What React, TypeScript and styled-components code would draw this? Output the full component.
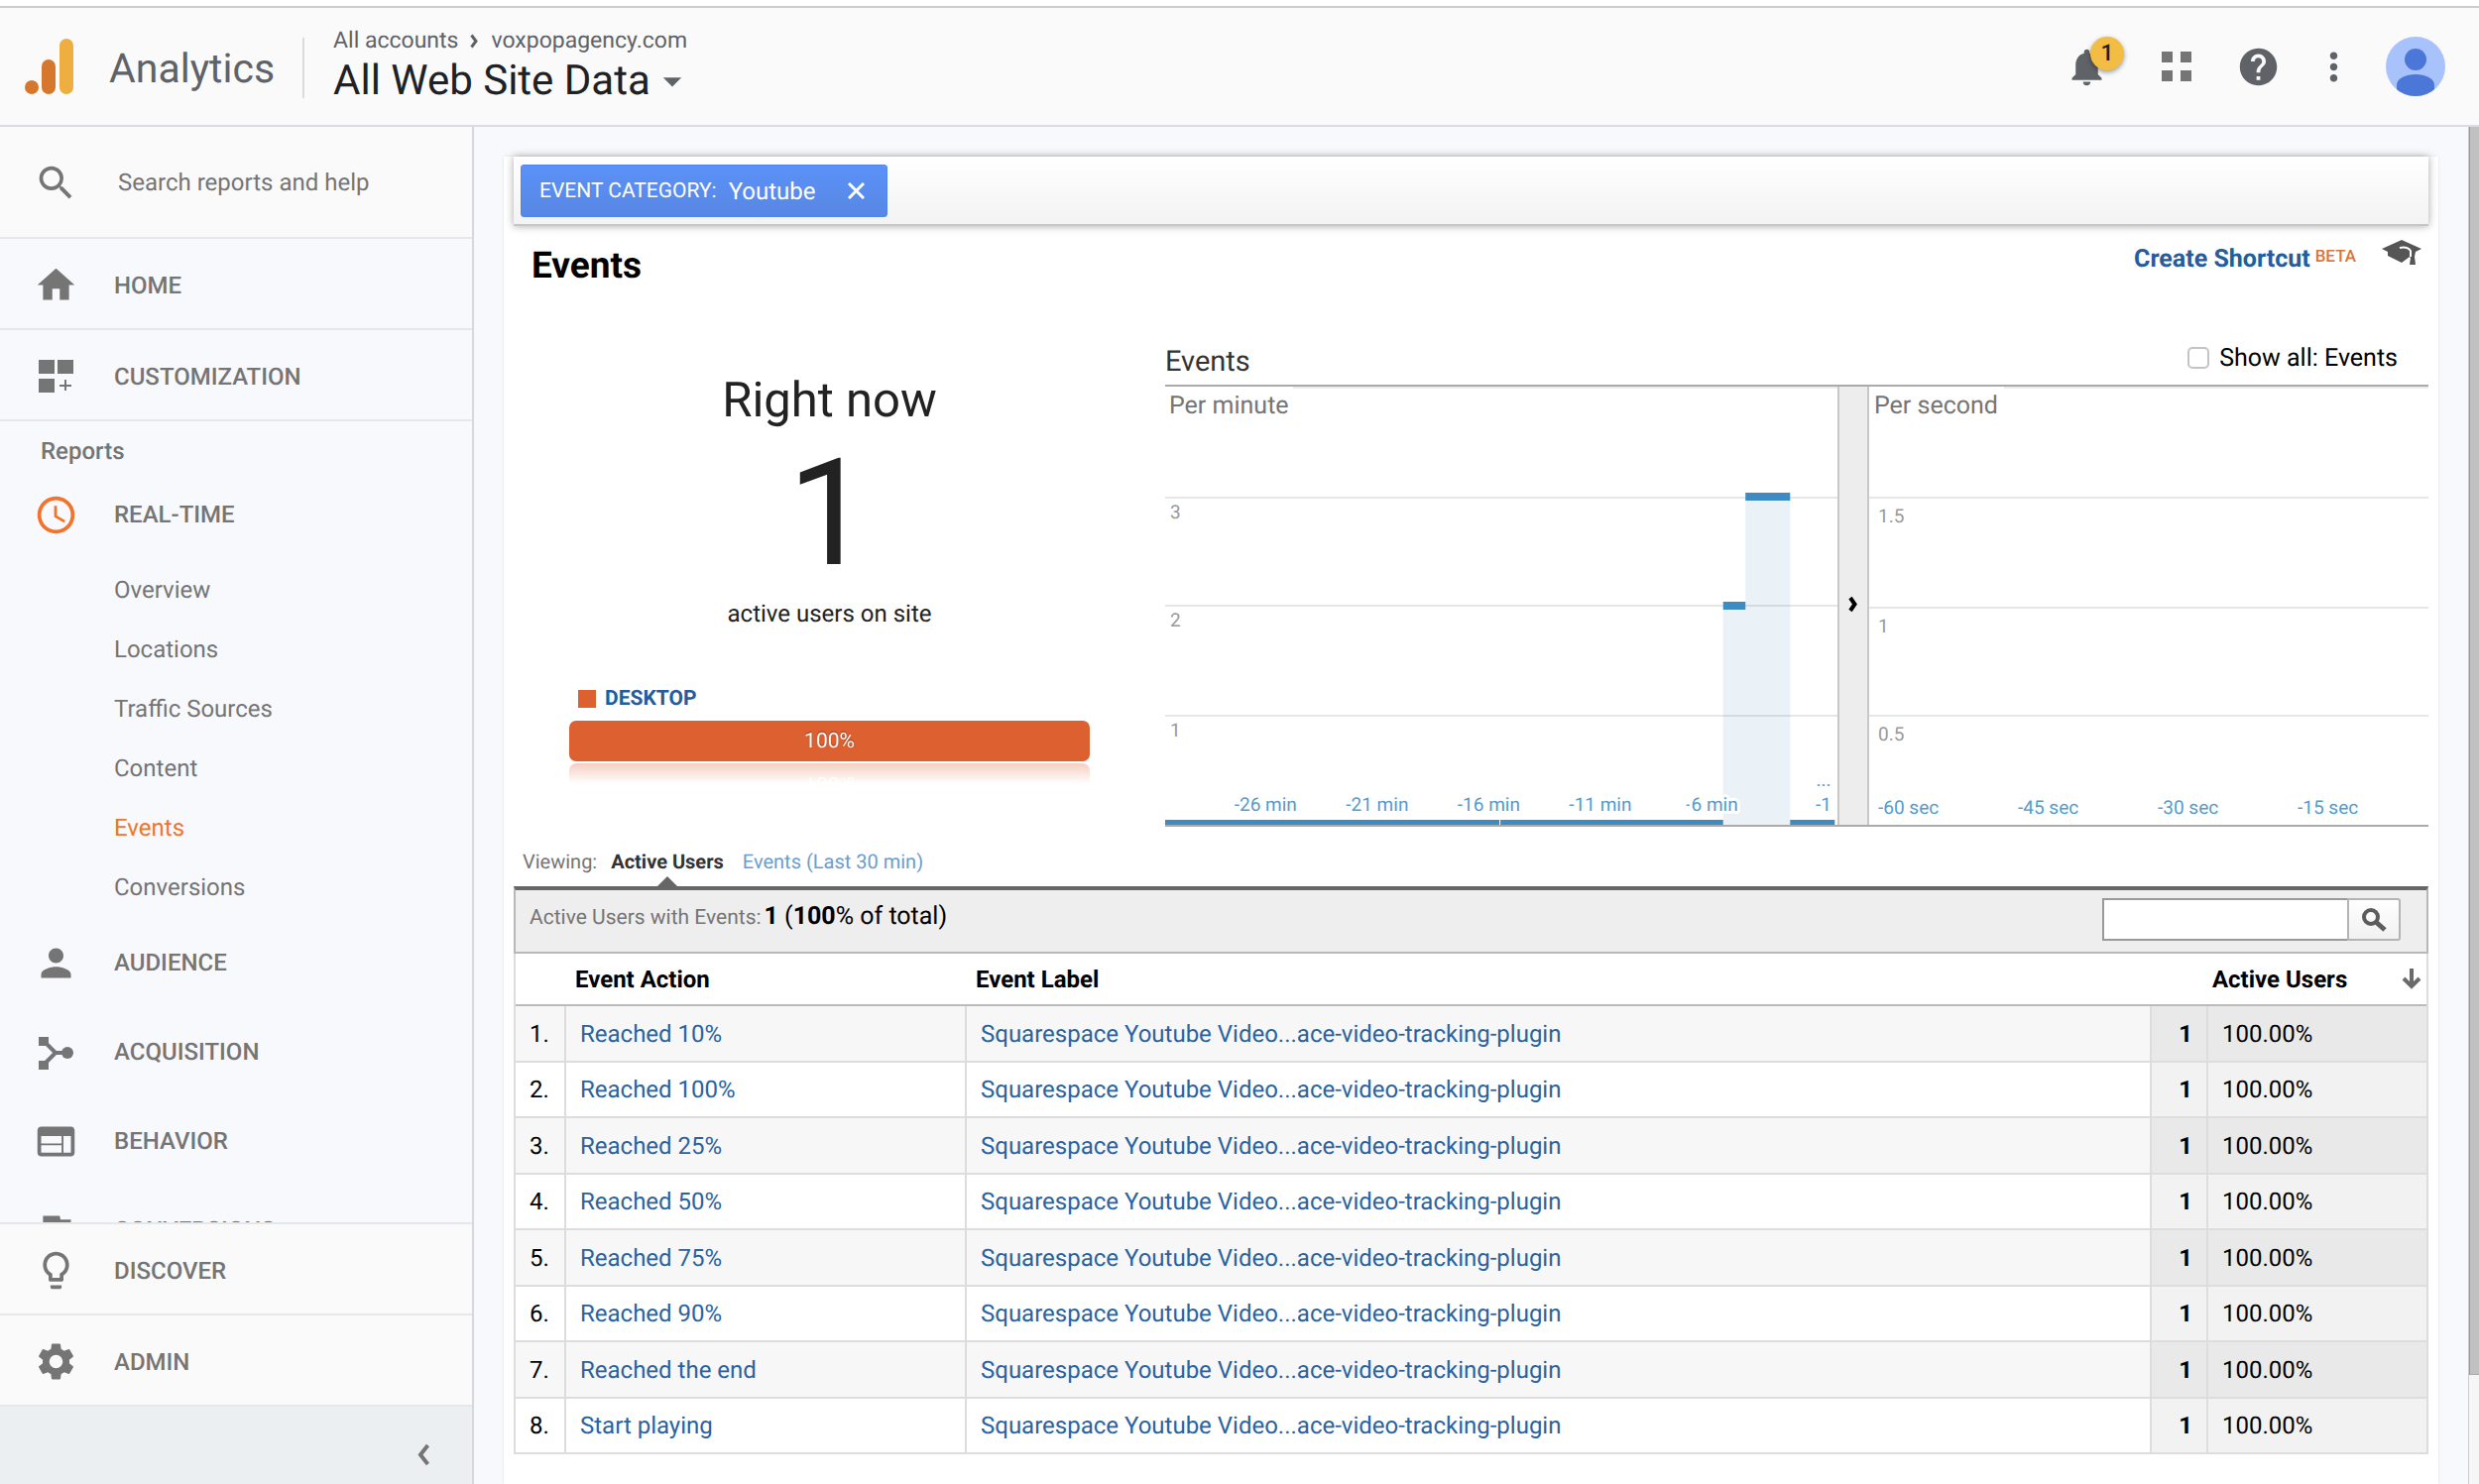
import React from 'react';
import styled, { createGlobalStyle } from 'styled-components';
import {
  MdAccessTime,
  MdArrowDropDown,
  MdFlag,
  MdHelp,
  MdHome,
  MdLightbulbOutline,
  MdMoreVert,
  MdNotifications,
  MdPerson,
  MdSearch,
  MdSettings,
  MdWeb,
} from 'react-icons/md';

const GlobalStyle = createGlobalStyle`
  *, *::before, *::after { box-sizing: border-box; }
  body {
    margin: 0;
    background: #f8f9fc;
    color: #000;
    font-family: Roboto, "Liberation Sans", sans-serif;
    font-size: 24px;
    text-rendering: geometricPrecision;
  }
  button, input { font: inherit; color: inherit; text-rendering: inherit; }
  button { border: 0; padding: 0; background: none; cursor: pointer; }
  a { color: inherit; text-decoration: none; }
  svg { display: block; flex: none; }
  h1, h2, h3, p, ul { margin: 0; padding: 0; font-weight: 400; }
  ul { list-style: none; }
`;

const Page = styled.div`
  display: flex;
  flex-direction: column;
  height: 100vh;
  overflow: hidden;
  border-top: 6px solid #fff;
`;

/* ---------- top bar ---------- */

const TopBar = styled.header`
  display: flex;
  flex: none;
  align-items: center;
  height: 122px;
  padding: 0 34px 0 25px;
  background: #fafafa;
  border-top: 2px solid #ccc;
  border-bottom: 2px solid #dadce2;
`;

const Brand = styled.a`
  display: flex;
  align-items: center;
  gap: 36px;
  color: #5f6368;
  font-size: 41px;
`;

const BrandName = styled.span`
  padding-top: 6px;
  line-height: 48px;
`;

const PropertyPicker = styled.div`
  display: flex;
  flex-direction: column;
  align-items: flex-start;
  margin-left: 28px;
  position: relative;
  padding-left: 31px;
  &::before {
    content: '';
    position: absolute;
    left: 0;
    top: 12px;
    bottom: 9px;
    width: 2px;
    background: #dadce0;
  }
`;

const Crumbs = styled.nav`
  display: flex;
  align-items: center;
  gap: 12px;
  color: #5f6368;
  font-size: 23px;
  line-height: 30px;
`;

const PropertyButton = styled.button`
  display: flex;
  align-items: center;
  color: #202124;
  font-size: 42px;
  line-height: 52px;
  svg { color: #5f6368; }
`;

const Actions = styled.div`
  display: flex;
  align-items: center;
  gap: 38px;
  margin-left: auto;
  color: #5f6368;
`;

const IconButton = styled.button<{ $width?: number }>`
  display: flex;
  justify-content: center;
  width: ${(p) => p.$width ?? 45}px;
`;

const BellButton = styled.button`
  position: relative;
  width: 52px;
`;

const Badge = styled.span`
  position: absolute;
  top: -8px;
  left: 26px;
  width: 34px;
  height: 34px;
  border-radius: 50%;
  background: #f2bd42;
  color: #202124;
  font-size: 23px;
  font-weight: 500;
  line-height: 34px;
  text-align: center;
  box-shadow: 0 2px 5px rgba(0, 0, 0, 0.4);
`;

/* ---------- sidebar ---------- */

const Body = styled.div`
  display: flex;
  flex: 1;
  min-height: 0;
`;

const Sidebar = styled.aside`
  display: flex;
  flex-direction: column;
  flex: none;
  width: 478px;
  border-right: 2px solid #d6d8da;
  color: #757575;
`;

const SearchRow = styled.label`
  display: flex;
  flex: none;
  align-items: center;
  gap: 40px;
  height: 113px;
  padding: 2px 34px 0;
  background: #fafafa;
  border-bottom: 2px solid #e6e7e9;
`;

const SearchInput = styled.input`
  flex: 1;
  min-width: 0;
  padding: 0 0 2px;
  border: 0;
  outline: 0;
  background: none;
  font-size: 24px;
  &::placeholder { color: #757575; opacity: 1; }
`;

const NavScroll = styled.nav`
  flex: 1;
  min-height: 0;
  overflow: hidden;
`;

const NavItem = styled.a<{ $ruled?: boolean }>`
  display: flex;
  align-items: center;
  gap: 36px;
  height: ${(p) => (p.$ruled ? 92 : 90)}px;
  padding: ${(p) => (p.$ruled ? 3 : 0)}px 0 0 34px;
  border-bottom: ${(p) => (p.$ruled ? '2px solid #e6e7e9' : '0')};
  font-weight: 500;
`;

const NavHeading = styled.h2`
  height: 49px;
  padding: 15px 0 0 41px;
  font-size: 24px;
  font-weight: 500;
  line-height: 30px;
`;

const SubList = styled.ul`
  padding: 1px 0;
`;

const SubLink = styled.a<{ $active?: boolean }>`
  display: block;
  padding-left: 115px;
  line-height: 60px;
  color: ${(p) => (p.$active ? '#f4732a' : 'inherit')};
`;

const NavFooter = styled.div`
  flex: none;
  border-top: 2px solid #e6e7e9;
  background: #fafafa;
`;

const Collapse = styled.button`
  display: flex;
  align-items: center;
  justify-content: flex-end;
  width: 100%;
  height: 78px;
  padding: 18px 43px 0 0;
  background: #eceff2;
  color: #757575;
`;

/* ---------- report ---------- */

const Main = styled.main`
  flex: 1;
  min-width: 0;
  padding: 30px 30px 0;
  overflow: hidden;
`;

const Card = styled.section`
  min-height: 100%;
  padding: 0 10px;
  background: #fff;
  box-shadow: 0 0 3px rgba(0, 0, 0, 0.1);
`;

const ScrollTrack = styled.div`
  flex: none;
  width: 11px;
  background: #f6f6f6;
  border-left: 1px solid #ccc;
`;

const ScrollThumb = styled.div`
  height: 92%;
  background: #c1c1c1;
  border-left: 1px solid #999;
  border-bottom: 1px solid #aaa;
`;

const FilterBar = styled.div`
  display: flex;
  align-items: center;
  height: 70px;
  padding: 0 7px;
  background: linear-gradient(#fff, #f3f3f3);
  border-bottom: 2px solid #c6c6c6;
  box-shadow: 0 0 8px rgba(0, 0, 0, 0.35);
`;

const Chip = styled.div`
  display: flex;
  align-items: center;
  gap: 12px;
  height: 53px;
  padding: 1px 22px 0 18px;
  border: 1px solid #5085ea;
  border-radius: 3px;
  background: linear-gradient(#5b91f7, #5787e4);
  color: #fff;
`;

const ChipName = styled.span`
  font-size: 21px;
`;

const ChipClose = styled.button`
  margin-left: 20px;
`;

const TitleRow = styled.div`
  display: flex;
  justify-content: space-between;
  height: 80px;
  padding: 0 7px 0 18px;
`;

const Title = styled.h1`
  font-size: 37px;
  font-weight: 700;
  line-height: 82px;
`;

const TitleActions = styled.div`
  display: flex;
  align-items: center;
  height: 66px;
`;

const Shortcut = styled.a`
  color: #245c9c;
  font-size: 25px;
  font-weight: 700;
`;

const Beta = styled.sup`
  margin: 0 26px 5px 5px;
  color: #d9763a;
  font-size: 17px;
  font-weight: 500;
  line-height: 18px;
`;

const CapButton = styled.button`
  margin-bottom: 12px;
`;

const Overview = styled.div`
  display: grid;
  grid-template-columns: 1fr 2fr;
  gap: 20px;
`;

const NowPanel = styled.div`
  display: flex;
  flex-direction: column;
  min-width: 0;
  padding: 66px 56px 0;
  color: #222;
  text-align: center;
`;

const NowTitle = styled.h2`
  font-size: 49px;
  line-height: 60px;
`;

const NowCount = styled.p`
  margin: 24px 0 26px;
  font-size: 150px;
  line-height: 120px;
`;

const NowCaption = styled.p`
  line-height: 30px;
`;

const Legend = styled.div`
  display: flex;
  align-items: center;
  gap: 9px;
  margin: 59px 0 10px 9px;
  color: #245c9c;
  font-size: 21px;
  font-weight: 700;
  line-height: 24px;
  &::before {
    content: '';
    width: 18px;
    height: 18px;
    background: #dd6031;
  }
`;

const DeviceBar = styled.div`
  height: 41px;
  border-radius: 7px;
  background: #dd6031;
  color: #fff;
  font-size: 21px;
  line-height: 42px;
  text-shadow: 0 -1px 1px rgba(0, 0, 0, 0.4);
  -webkit-box-reflect: below 2px linear-gradient(transparent 50%, rgba(0, 0, 0, 0.3));
`;

const ChartPanel = styled.div`
  min-width: 0;
  padding-top: 33px;
`;

const ChartHead = styled.div`
  display: flex;
  align-items: center;
  justify-content: space-between;
  height: 49px;
  border-bottom: 2px solid #aaa;
`;

const ChartTitle = styled.h2`
  color: #333;
  font-size: 29px;
`;

const CheckLabel = styled.label`
  display: flex;
  align-items: center;
  gap: 10px;
  margin: 0 31px 7px 0;
  font-size: 25px;
`;

const Check = styled.input`
  appearance: none;
  width: 22px;
  height: 22px;
  margin: 0;
  border: 2px solid #c4c4c4;
  border-radius: 5px;
  background: #fff;
`;

const Charts = styled.div`
  display: flex;
  border-bottom: 2px solid #aaa;
`;

const Plot = styled.div<{ $grow: number }>`
  position: relative;
  flex: ${(p) => p.$grow} 1 0;
  min-width: 0;
  height: 442px;
`;

const PlotName = styled.h3<{ $left: number }>`
  position: absolute;
  top: 5px;
  left: ${(p) => p.$left}px;
  color: #757575;
  font-size: 25px;
  line-height: 30px;
`;

const PlotSvg = styled.svg`
  width: 100%;
  height: 100%;
  font-size: 19px;
`;

const Splitter = styled.button`
  display: flex;
  align-items: center;
  justify-content: center;
  flex: none;
  width: 32px;
  padding-bottom: 4px;
  border: solid #c8c8c8;
  border-width: 0 2px;
  background: #ededed;
`;

const ViewRow = styled.div`
  display: flex;
  align-items: flex-start;
  height: 60px;
  padding: 20px 0 0 9px;
  color: #757575;
  font-size: 20px;
  line-height: 30px;
`;

const ViewTab = styled.button<{ $current?: boolean }>`
  margin-left: ${(p) => (p.$current ? 14 : 19)}px;
  color: ${(p) => (p.$current ? '#333' : '#6c9dcb')};
  font-weight: ${(p) => (p.$current ? 700 : 400)};
  line-height: 30px;
  &::after {
    content: '';
    display: ${(p) => (p.$current ? 'block' : 'none')};
    width: 22px;
    margin: 0 auto;
    border: solid transparent;
    border-width: 0 11px 11px;
    border-bottom-color: #666;
  }
`;

const Summary = styled.div`
  display: flex;
  align-items: center;
  justify-content: space-between;
  height: 68px;
  padding: 0 26px 0 14px;
  background: #eee;
  border: 2px solid #b8b8b8;
  border-top: 4px solid #666;
`;

const SummaryText = styled.p`
  padding-bottom: 9px;
  font-size: 25px;
`;

const SummaryLabel = styled.span`
  margin-right: 3px;
  color: #757575;
  font-size: 21px;
`;

const TableSearch = styled.form`
  display: flex;
  height: 43px;
  margin-bottom: 3px;
`;

const TableSearchInput = styled.input`
  width: 247px;
  padding: 0 8px;
  border: 2px solid #999;
  border-right-width: 0;
  background: #fff;
`;

const TableSearchButton = styled.button`
  display: flex;
  align-items: center;
  justify-content: center;
  width: 54px;
  border: 2px solid #b4b4b4;
  border-radius: 0 3px 3px 0;
  background: linear-gradient(#fff, #f1f1f1);
`;

const Table = styled.table`
  width: 100%;
  table-layout: fixed;
  border: solid #ddd;
  border-width: 0 2px;
  border-spacing: 0;
  text-align: left;
`;

const HeadCell = styled.th<{ $pad?: number }>`
  height: 53px;
  padding: 0 5px 0 ${(p) => p.$pad ?? 9}px;
  border-bottom: 2px solid #bbb;
  font-weight: 700;
`;

const SortButton = styled.button`
  display: flex;
  align-items: center;
  justify-content: space-between;
  width: 100%;
  font-weight: 700;
`;

const Row = styled.tr`
  --plain: #fff;
  --metric: #f2f2f2;
  height: 56px;
  &:nth-child(odd) {
    --plain: #f7f7f7;
    --metric: #e9e9e9;
    height: 57px;
  }
`;

const Cell = styled.td<{ $metric?: boolean }>`
  padding: 0 14px;
  background: var(${(p) => (p.$metric ? '--metric' : '--plain')});
  border-right: 2px solid #ddd;
  border-bottom: 2px solid #ddd;
  &:last-child { border-right: 0; }
`;

const CountCell = styled(Cell)`
  font-weight: 700;
  text-align: right;
`;

const CellLink = styled.a`
  color: #2a639f;
`;

/* ---------- drawings ---------- */

const Logo = () => (
  <svg width="49" height="56" viewBox="0 0 49 56" aria-hidden="true">
    <circle cx="7" cy="49" r="7" fill="#d5782d" />
    <rect x="17" y="21" width="14" height="35" rx="7" fill="#d5782d" />
    <rect x="35" y="0" width="14" height="56" rx="7" fill="#eeae40" />
  </svg>
);

const Chevron = ({ size, stroke, left }: { size: number; stroke: number; left?: boolean }) => (
  <svg width={size / 2 + stroke} height={size + stroke} aria-hidden="true">
    <path
      d={
        left
          ? `M${size / 2 + stroke / 2} ${stroke / 2}L${stroke} ${(size + stroke) / 2}L${size / 2 + stroke / 2} ${size + stroke / 2}`
          : `M${stroke / 2} ${stroke / 2}L${size / 2} ${(size + stroke) / 2}L${stroke / 2} ${size + stroke / 2}`
      }
      fill="none"
      stroke="currentColor"
      strokeWidth={stroke}
    />
  </svg>
);

const AppsIcon = () => (
  <svg width="30" height="30" fill="#757575" aria-hidden="true">
    <path d="M0 0h11v11H0zM19 0h11v11H19zM0 19h11v11H0zM19 19h11v11H19z" />
  </svg>
);

const Avatar = () => (
  <svg width="60" height="60" viewBox="0 0 60 60" aria-hidden="true">
    <clipPath id="avatar-disc">
      <circle cx="30" cy="30" r="30" />
    </clipPath>
    <g clipPath="url(#avatar-disc)">
      <rect width="60" height="60" fill="#a8c2fb" />
      <circle cx="30" cy="23" r="11" fill="#4b77d8" />
      <path d="M11 60V49c0-7 9-11 19-11s19 4 19 11v11z" fill="#4b77d8" />
    </g>
  </svg>
);

const CustomizeIcon = () => (
  <svg width="45" height="45" aria-hidden="true">
    <path d="M5 6h16v14H5zM24 6h16v14H24zM5 25h16v14H5z" fill="currentColor" />
    <path d="M32 26v11M26 32h12" stroke="currentColor" strokeWidth="2" />
  </svg>
);

const AcquisitionIcon = () => (
  <svg width="45" height="45" aria-hidden="true">
    <path d="M5 7h10v9H5zM5 31h10v9H5z" fill="currentColor" />
    <circle cx="34" cy="23" r="6" fill="currentColor" />
    <path d="M12 13l10 10h10M12 33l10-10" fill="none" stroke="currentColor" strokeWidth="4" />
  </svg>
);

const CloseIcon = () => (
  <svg width="17" height="17" aria-hidden="true">
    <path d="M1 1l15 15M16 1L1 16" stroke="#fff" strokeWidth="3" />
  </svg>
);

const CapIcon = () => (
  <svg width="40" height="26" viewBox="0 0 40 26" aria-hidden="true">
    <path d="M0 9L20 0l20 9-6 3-1 5 1 8h-6l1-7-1-1-8 6-14-7v-4z" fill="#555" />
    <path d="M18 8c5-1 9 0 11 3v6" fill="none" stroke="#fff" strokeWidth="2" />
  </svg>
);

const MagnifierIcon = () => (
  <svg width="26" height="24" aria-hidden="true">
    <circle cx="10" cy="9" r="7" fill="none" stroke="#5c5c5c" strokeWidth="4" />
    <path d="M15 14l9 8" stroke="#5c5c5c" strokeWidth="5" />
  </svg>
);

const SortIcon = () => (
  <svg width="20" height="21" aria-hidden="true">
    <path d="M10 0v18M2 10l8 8 8-8" fill="none" stroke="#6a6a6a" strokeWidth="4" />
  </svg>
);

/* ---------- charts ---------- */

const AXIS_Y = 442;
const BLUE = '#3d8bc3';
const TICK_BLUE = '#559bcd';

type GridLine = { y: number; label: string };

const Grid = ({ lines, x, drop, from }: { lines: GridLine[]; x: number; drop: number; from: number }) => (
  <>
    <line x1={from} x2="100%" y1="1" y2="1" stroke="#ececec" strokeWidth="2" />
    {lines.map((l) => (
      <React.Fragment key={l.label}>
        <line x1="0" x2="100%" y1={l.y} y2={l.y} stroke="#e6e6e6" strokeWidth="2" />
        <text x={x} y={l.y + drop} fill="#999">
          {l.label}
        </text>
      </React.Fragment>
    ))}
  </>
);

const MINUTES = 30;
/* the last slot stops just short of the splitter */
const PLOT_SHARE = 99.6;
const minuteX = (slot: number) => `${(slot / MINUTES) * PLOT_SHARE}%`;
const minuteRuns = [
  { start: 0, count: 15, y: AXIS_Y },
  { start: 15, count: 10, y: AXIS_Y },
  { start: 25, count: 1, y: 221 },
  { start: 26, count: 2, y: 111 },
  { start: 28, count: 2, y: AXIS_Y },
];

const MinuteChart = () => (
  <PlotSvg role="img" aria-label="Events per minute">
    <Grid
      lines={[
        { y: 112, label: '3' },
        { y: 221, label: '2' },
        { y: 332, label: '1' },
      ]}
      x={5}
      drop={21}
      from={129}
    />
    {minuteRuns.map((r) => (
      <React.Fragment key={r.start}>
        <rect
          x={minuteX(r.start)}
          width={minuteX(r.count)}
          y={r.y}
          height={AXIS_Y - r.y}
          fill={BLUE}
          fillOpacity="0.11"
        />
        <rect
          x={minuteX(r.start)}
          width={minuteX(r.count)}
          y={r.y === AXIS_Y ? r.y - 5 : r.y - 4}
          height={8}
          fill={BLUE}
        />
      </React.Fragment>
    ))}
    <line x1={minuteX(15)} x2={minuteX(15)} y1={AXIS_Y - 5} y2={AXIS_Y} stroke="#fff" />
    <g fill={TICK_BLUE} textAnchor="middle" stroke="#fff" strokeWidth="6" strokeLinejoin="round" paintOrder="stroke">
      {[26, 21, 16, 11, 6].map((m) => (
        <text key={m} x={minuteX(MINUTES - m + 0.5)} y="428">
          -{m} min
        </text>
      ))}
      <text x={minuteX(29.5)} y="428">
        -1
      </text>
      <text x={minuteX(29.5)} y="403">
        ...
      </text>
    </g>
  </PlotSvg>
);

const SecondChart = () => (
  <PlotSvg role="img" aria-label="Events per second">
    <Grid
      lines={[
        { y: 112, label: '1.5' },
        { y: 223, label: '1' },
        { y: 332, label: '0.5' },
      ]}
      x={9}
      drop={25}
      from={136}
    />
    <g fill={TICK_BLUE}>
      <svg x="9" width="100%" overflow="visible">
        {[60, 45, 30, 15].map((s) => (
          <text key={s} x={`${((60 - s) / 60) * 100}%`} y="431">
            -{s} sec
          </text>
        ))}
      </svg>
    </g>
  </PlotSvg>
);

/* ---------- page ---------- */

const subPages = ['Overview', 'Locations', 'Traffic Sources', 'Content', 'Events', 'Conversions'];
const actions = [
  'Reached 10%',
  'Reached 100%',
  'Reached 25%',
  'Reached 50%',
  'Reached 75%',
  'Reached 90%',
  'Reached the end',
  'Start playing',
];

export default function App() {
  return (
    <Page>
      <GlobalStyle />
      <TopBar>
        <Brand href="#">
          <Logo />
          <BrandName>Analytics</BrandName>
        </Brand>
        <PropertyPicker>
          <Crumbs>
            <a href="#">All accounts</a>
            <Chevron size={12} stroke={3} />
            <a href="#">voxpopagency.com</a>
          </Crumbs>
          <PropertyButton>
            All Web Site Data
            <MdArrowDropDown size={44} />
          </PropertyButton>
        </PropertyPicker>
        <Actions>
          <BellButton aria-label="Notifications">
            <MdNotifications size={45} />
            <Badge>1</Badge>
          </BellButton>
          <IconButton aria-label="Apps">
            <AppsIcon />
          </IconButton>
          <IconButton aria-label="Help">
            <MdHelp size={45} />
          </IconButton>
          <IconButton aria-label="More" $width={30}>
            <MdMoreVert size={45} />
          </IconButton>
          <IconButton aria-label="Account" $width={60}>
            <Avatar />
          </IconButton>
        </Actions>
      </TopBar>

      <Body>
        <Sidebar>
          <SearchRow>
            <MdSearch size={45} />
            <SearchInput placeholder="Search reports and help" aria-label="Search reports and help" />
          </SearchRow>
          <NavScroll>
            <NavItem href="#" $ruled>
              <MdHome size={45} />
              HOME
            </NavItem>
            <NavItem href="#" $ruled>
              <CustomizeIcon />
              CUSTOMIZATION
            </NavItem>
            <NavHeading>Reports</NavHeading>
            <NavItem href="#">
              <MdAccessTime size={45} color="#f4732a" />
              REAL-TIME
            </NavItem>
            <SubList>
              {subPages.map((name) => (
                <li key={name}>
                  <SubLink href="#" $active={name === 'Events'}>
                    {name}
                  </SubLink>
                </li>
              ))}
            </SubList>
            <NavItem href="#">
              <MdPerson size={45} />
              AUDIENCE
            </NavItem>
            <NavItem href="#">
              <AcquisitionIcon />
              ACQUISITION
            </NavItem>
            <NavItem href="#">
              <MdWeb size={45} />
              BEHAVIOR
            </NavItem>
            <NavItem href="#">
              <MdFlag size={45} />
              CONVERSIONS
            </NavItem>
          </NavScroll>
          <NavFooter>
            <NavItem href="#" $ruled>
              <MdLightbulbOutline size={45} />
              DISCOVER
            </NavItem>
            <NavItem href="#" $ruled>
              <MdSettings size={45} />
              ADMIN
            </NavItem>
            <Collapse aria-label="Collapse menu">
              <Chevron size={19} stroke={4} left />
            </Collapse>
          </NavFooter>
        </Sidebar>

        <Main>
          <Card>
            <FilterBar>
              <Chip>
                <ChipName>EVENT CATEGORY:</ChipName>
                <span>Youtube</span>
                <ChipClose aria-label="Remove filter">
                  <CloseIcon />
                </ChipClose>
              </Chip>
            </FilterBar>

            <TitleRow>
              <Title>Events</Title>
              <TitleActions>
                <Shortcut href="#">Create Shortcut</Shortcut>
                <Beta>BETA</Beta>
                <CapButton aria-label="Education">
                  <CapIcon />
                </CapButton>
              </TitleActions>
            </TitleRow>

            <Overview>
              <NowPanel>
                <NowTitle>Right now</NowTitle>
                <NowCount>1</NowCount>
                <NowCaption>active users on site</NowCaption>
                <Legend>DESKTOP</Legend>
                <DeviceBar>100%</DeviceBar>
              </NowPanel>

              <ChartPanel>
                <ChartHead>
                  <ChartTitle>Events</ChartTitle>
                  <CheckLabel>
                    <Check type="checkbox" />
                    Show all: Events
                  </CheckLabel>
                </ChartHead>
                <Charts>
                  <Plot $grow={678}>
                    <MinuteChart />
                    <PlotName $left={4}>Per minute</PlotName>
                  </Plot>
                  <Splitter aria-label="Show per second chart">
                    <Chevron size={13} stroke={4} />
                  </Splitter>
                  <Plot $grow={564}>
                    <SecondChart />
                    <PlotName $left={5}>Per second</PlotName>
                  </Plot>
                </Charts>
              </ChartPanel>
            </Overview>

            <ViewRow>
              Viewing:
              <ViewTab $current>Active Users</ViewTab>
              <ViewTab>Events (Last 30 min)</ViewTab>
            </ViewRow>

            <Summary>
              <SummaryText>
                <SummaryLabel>Active Users with Events:</SummaryLabel>
                <b>1</b> (<b>100</b>% of total)
              </SummaryText>
              <TableSearch>
                <TableSearchInput type="text" aria-label="Search table" />
                <TableSearchButton type="button" aria-label="Search">
                  <MagnifierIcon />
                </TableSearchButton>
              </TableSearch>
            </Summary>

            <Table>
              <colgroup>
                <col width="51" />
                <col width="404" />
                <col />
                <col width="57" />
                <col width="220" />
              </colgroup>
              <thead>
                <tr>
                  <HeadCell aria-label="Row" />
                  <HeadCell>Event Action</HeadCell>
                  <HeadCell>Event Label</HeadCell>
                  <HeadCell colSpan={2} $pad={61}>
                    <SortButton>
                      Active Users
                      <SortIcon />
                    </SortButton>
                  </HeadCell>
                </tr>
              </thead>
              <tbody>
                {actions.map((action, i) => (
                  <Row key={action}>
                    <Cell>{i + 1}.</Cell>
                    <Cell>
                      <CellLink href="#">{action}</CellLink>
                    </Cell>
                    <Cell>
                      <CellLink href="#">Squarespace Youtube Video...ace-video-tracking-plugin</CellLink>
                    </Cell>
                    <CountCell $metric>1</CountCell>
                    <Cell $metric>100.00%</Cell>
                  </Row>
                ))}
              </tbody>
            </Table>
          </Card>
        </Main>
        <ScrollTrack>
          <ScrollThumb />
        </ScrollTrack>
      </Body>
    </Page>
  );
}
